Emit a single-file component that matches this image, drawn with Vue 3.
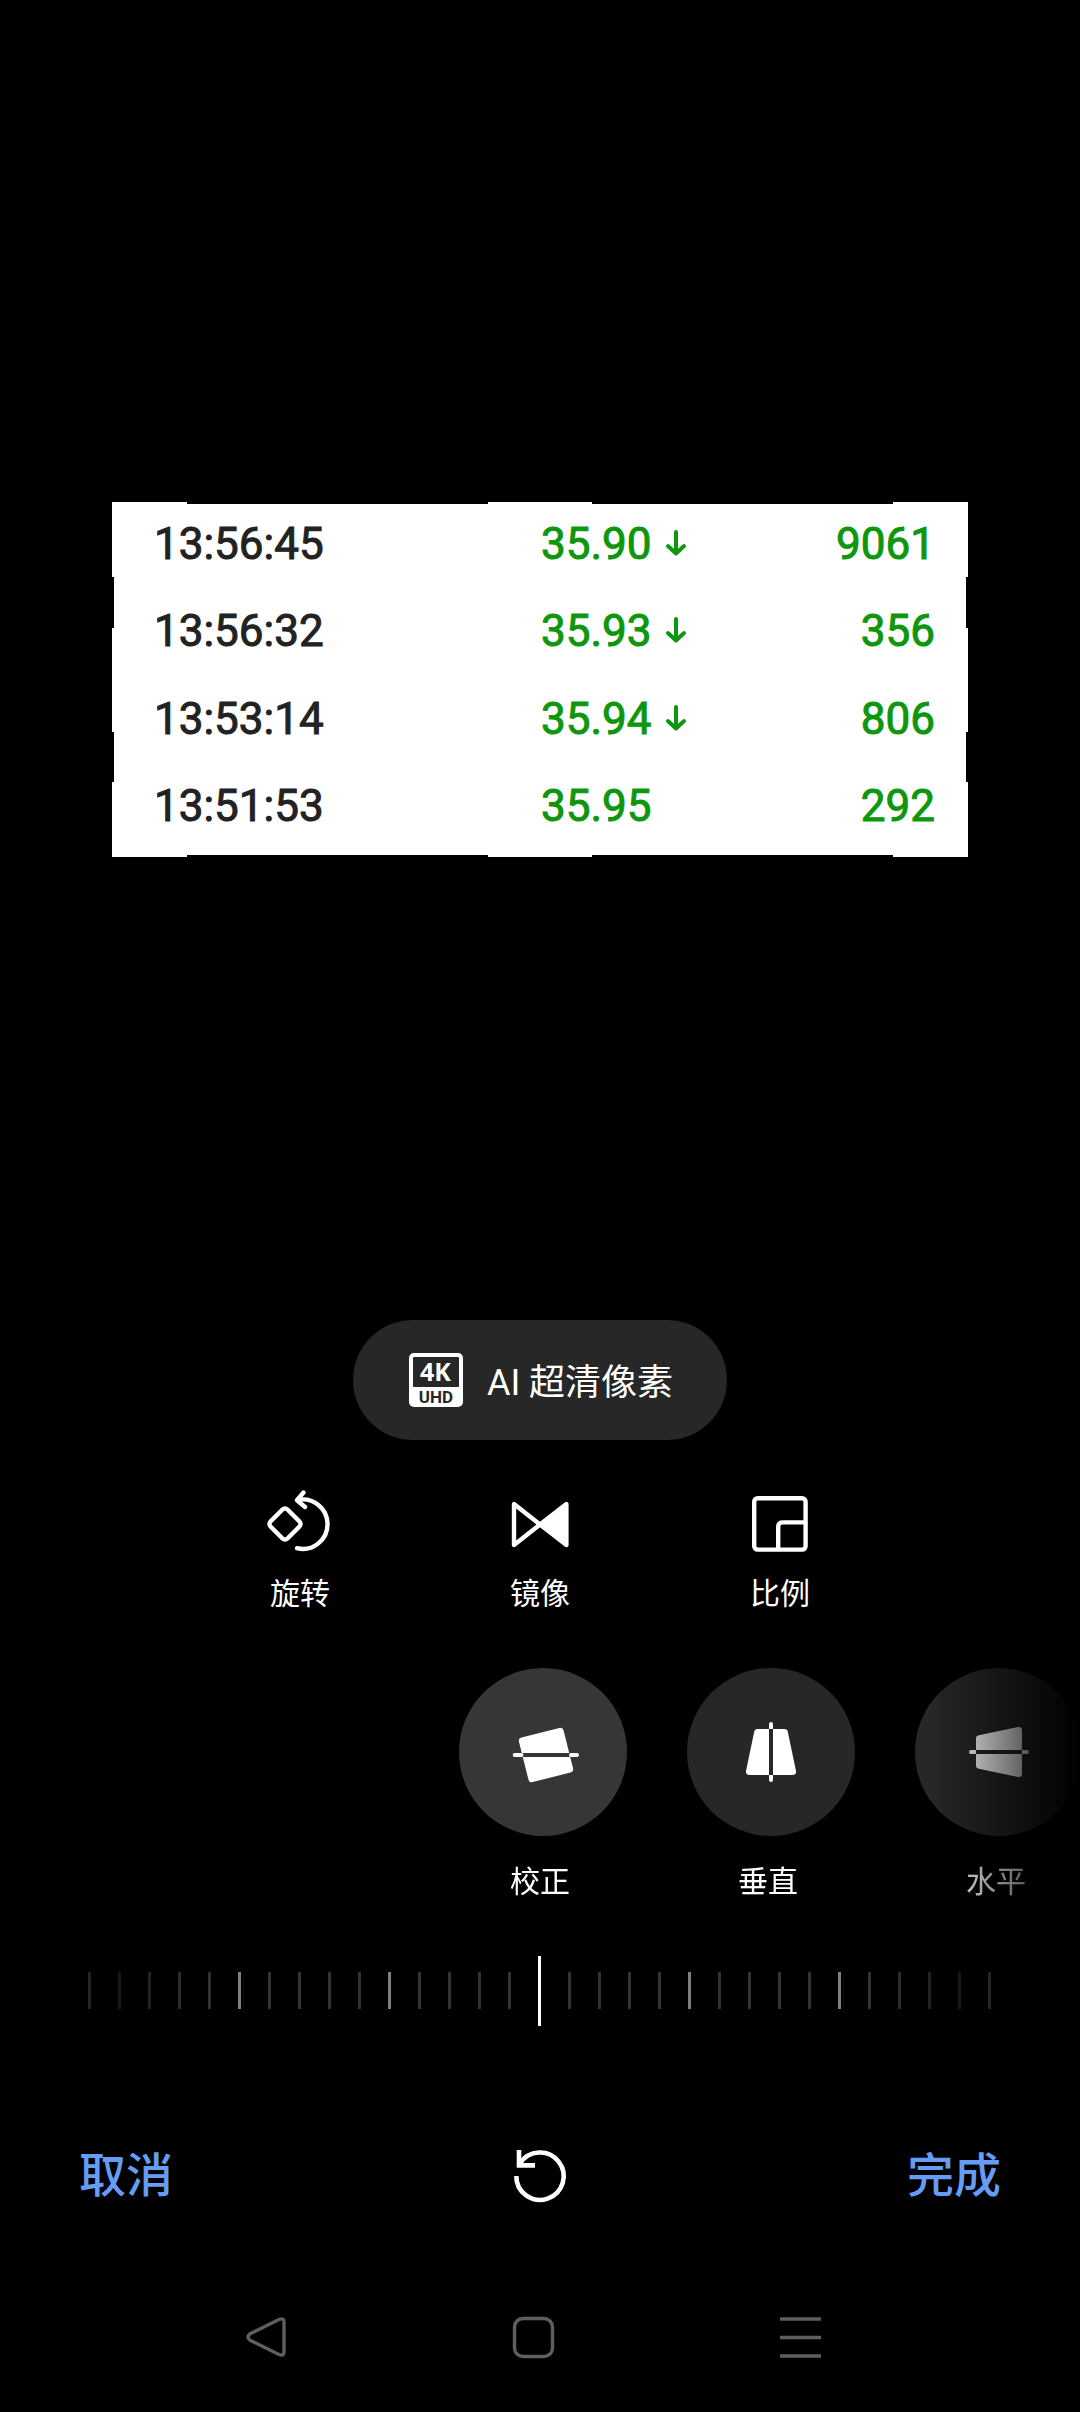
<template>
  <div class="editor">
    <main class="stage">
      <div class="crop">
        <table class="trades">
          <tbody>
            <tr v-for="item in trades" :key="item.time">
              <td class="time">{{ item.time }}</td>
              <td class="price">
                {{ item.price }}
                <svg v-if="item.down" class="arrow" viewBox="0 0 20 26">
                  <path d="M10 2V23M2 16L10 23.5L18 16" />
                </svg>
              </td>
              <td class="count">{{ item.count }}</td>
            </tr>
          </tbody>
        </table>
        <!-- 裁剪框手柄 -->
        <i v-for="h in handles" :key="h" class="handle" :class="h"></i>
      </div>
    </main>

    <button class="ai" type="button">
      <svg class="uhd" viewBox="0 0 54 54">
        <rect width="54" height="54" rx="5" fill="#fff" />
        <rect x="4" y="4" width="46" height="30" rx="1" fill="#272727" />
        <text class="k4" x="26.5" y="27.5">4K</text>
        <text class="hd" x="27" y="49.5">UHD</text>
      </svg>
      <span>AI 超清像素</span>
    </button>

    <div class="tools">
      <button class="tool" type="button" @click="angle = 0">
        <svg class="icon line" viewBox="0 0 72 72">
          <rect x="9" y="24" width="24" height="24" rx="3.5" transform="rotate(45 21 36)" />
          <path d="M33 60.2A24.7 24.7 0 1 0 33 12.2M39.5 4.5L33 12.2L41 19" />
        </svg>
        <span>旋转</span>
      </button>
      <button class="tool" type="button">
        <svg class="icon line" viewBox="0 0 72 72">
          <path d="M10 16V57L36 36.5Z" />
          <path d="M62.4 16V57L36 36.5Z" fill="#fff" />
        </svg>
        <span>镜像</span>
      </button>
      <button class="tool" type="button">
        <svg class="icon line" viewBox="0 0 72 72">
          <rect x="10.2" y="10.2" width="51.4" height="51.4" rx="3.5" />
          <path d="M34.2 61V39Q34.2 34.4 39 34.4H61" />
        </svg>
        <span>比例</span>
      </button>
    </div>

    <div class="modes">
      <button
        v-for="m in modes"
        :key="m.id"
        type="button"
        class="mode"
        :class="{ active: m.id === mode }"
        @click="mode = m.id"
      >
        <span class="circle">
          <svg v-if="m.id === 'rotate'" class="icon solid" viewBox="0 0 72 72">
            <rect x="16" y="16" width="46" height="46" rx="3.5" transform="rotate(-14 39 39)" />
            <path class="cut" d="M13 39H65" />
            <path class="bar" d="M7.7 39H14.5M64 39H70" />
            <path class="butt" d="M8 39H15M63.5 39H70" />
          </svg>
          <svg v-else class="icon solid" viewBox="0 0 72 72">
            <g :transform="m.id === 'horizontal' ? 'rotate(-90 36 36)' : null">
              <path d="M22.5 13H49.5Q52.2 13 52.8 15.8L61 55Q61.5 59 57.5 59H14.5Q10.5 59 11 55L19.2 15.8Q19.8 13 22.5 13Z" />
              <path class="cut" d="M36 13V59" />
              <path class="bar" d="M36 8V11M36 61V64" />
              <path class="butt" d="M36 8V13M36 59V64" />
            </g>
          </svg>
        </span>
        <span>{{ m.name }}</span>
      </button>
    </div>

    <div class="ruler">
      <div class="ticks">
        <i v-for="n in 31" :key="n" :style="{ background: tickColor(n - 1) }"></i>
      </div>
      <input v-model.number="angle" type="range" min="-45" max="45" aria-label="校正角度" />
    </div>

    <footer class="actions">
      <button class="text" type="button">取消</button>
      <button class="reset" type="button" aria-label="重置" @click="angle = 0">
        <svg viewBox="0 0 60 60">
          <path d="M6.3 30A23.7 23.7 0 1 0 10 17.5" />
          <path d="M9 4V19.4H25" />
        </svg>
      </button>
      <button class="text" type="button">完成</button>
    </footer>

    <nav class="system">
      <button type="button" aria-label="返回">
        <svg viewBox="0 0 48 48">
          <path d="M8 20.8L36.5 6.7Q42 4.2 42 9V39Q42 43.8 36.5 41.3L8 27.2Q4 24 8 20.8Z" />
        </svg>
      </button>
      <button type="button" aria-label="主页">
        <svg viewBox="0 0 48 48">
          <rect x="5.5" y="5.5" width="38" height="38" rx="8.5" />
        </svg>
      </button>
      <button type="button" aria-label="最近任务">
        <svg viewBox="0 0 48 48">
          <path d="M4 6H45M4 24.5H45M4 43H45" />
        </svg>
      </button>
    </nav>
  </div>
</template>
<script setup>
import { ref } from "vue";
const trades = [
  { time: "13:56:45", price: "35.90", count: 9061, down: true },
  { time: "13:56:32", price: "35.93", count: 356, down: true },
  { time: "13:53:14", price: "35.94", count: 806, down: true },
  { time: "13:51:53", price: "35.95", count: 292, down: false },
];
const handles = ["tl", "tr", "bl", "br", "top", "bottom", "left-a", "right-a"];
const modes = [
  { id: "rotate", name: "校正" },
  { id: "vertical", name: "垂直" },
  { id: "horizontal", name: "水平" },
];
const mode = ref("rotate");
const angle = ref(0);
// 两端刻度逐渐变暗
const fade = ["#252525", "#191919", "#222", "#2b2b2b", "#323232"];
const tickColor = (i) => {
  if (i === 15) return "transparent";
  const edge = Math.min(i, 30 - i);
  if (edge < fade.length) return fade[edge];
  return i % 5 === 0 ? "#7f7f7f" : "#333";
};
</script>
<style>
body {
  margin: 0;
  background: #000;
}
</style>
<style scoped>
.editor {
  display: flex;
  flex-direction: column;
  min-height: 100vh;
  box-sizing: border-box;
  overflow: hidden;
  background: #000;
  color: #fff;
  font-family: Roboto, "Noto Sans CJK SC", sans-serif;
}
button {
  padding: 0;
  border: 0;
  background: none;
  color: inherit;
  font: inherit;
  cursor: pointer;
}
svg {
  display: block;
  overflow: visible;
}
.stage {
  flex: 1;
  display: flex;
  align-items: center;
  padding: 39px 114px 0;
}
.crop {
  position: relative;
  flex: 1;
  padding-bottom: 1px;
  background: #fff;
}
.trades {
  width: 100%;
  height: 350px;
  border-collapse: collapse;
  table-layout: fixed;
  font-size: 44px;
  line-height: 52px;
  color: #0e970e;
  -webkit-text-stroke: 1px currentColor;
}
.trades td {
  padding: 0 0 8px;
  white-space: nowrap;
}
.trades .time {
  width: 50%;
  padding-left: 40px;
  box-sizing: border-box;
  color: #222;
}
.trades .price {
  padding-left: 1px;
}
.trades .count {
  padding-right: 31px;
  text-align: right;
}
.arrow {
  display: inline-block;
  width: 20px;
  height: 26px;
  margin-left: 4px;
  vertical-align: 3px;
  fill: none;
  stroke: currentColor;
  stroke-width: 4;
  stroke-linecap: round;
  stroke-linejoin: round;
}
.handle {
  position: absolute;
  width: 75px;
  height: 75px;
  box-sizing: border-box;
  border: 0 solid #fff;
}
.tl { left: -2px; top: -2px; border-width: 2px 0 0 2px; }
.tr { right: -2px; top: -2px; border-width: 2px 2px 0 0; }
.bl { left: -2px; bottom: -2px; border-width: 0 0 2px 2px; }
.br { right: -2px; bottom: -2px; border-width: 0 2px 2px 0; }
.top,
.bottom {
  left: calc(50% - 52px);
  width: 104px;
  height: 2px;
  background: #fff;
}
.top { top: -2px; }
.bottom { bottom: -2px; }
.left-a,
.right-a {
  top: calc(50% - 52px);
  width: 2px;
  height: 104px;
  background: #fff;
}
.left-a { left: -2px; }
.right-a { right: -2px; }
.ai {
  display: flex;
  align-items: center;
  align-self: center;
  gap: 24px;
  height: 120px;
  padding: 0 54px 0 56px;
  border-radius: 60px;
  background: #272727;
  font-size: 36px;
}
.ai span {
  padding-bottom: 2px;
}
.uhd {
  width: 54px;
  height: 54px;
  text-anchor: middle;
}
.k4 {
  font: 700 25px "Noto Sans", sans-serif;
  fill: #fff;
}
.hd {
  font: 700 17px Roboto, sans-serif;
  fill: #272727;
}
.tools {
  display: flex;
  justify-content: center;
  margin-top: 48px;
}
.tool,
.mode {
  display: flex;
  flex-direction: column;
  align-items: center;
  font-size: 30px;
  line-height: 40px;
}
.tool {
  width: 240px;
  gap: 14px;
}
.icon {
  width: 72px;
  height: 72px;
}
.line {
  fill: none;
  stroke: #fff;
  stroke-width: 4.4;
  stroke-linecap: round;
  stroke-linejoin: round;
}
.modes {
  display: flex;
  gap: 54px;
  margin-top: 54px;
  padding-left: calc(50% - 87px);
  overflow: hidden;
  -webkit-mask-image: linear-gradient(to left, transparent, #000 150px);
  mask-image: linear-gradient(to left, transparent, #000 150px);
}
.mode {
  flex: none;
  gap: 26px;
}
.circle {
  display: flex;
  align-items: center;
  justify-content: center;
  width: 168px;
  height: 168px;
  margin-left: 6px;
  border-radius: 50%;
  background: #272727;
}
.active .circle {
  background: #363636;
}
.solid {
  fill: #fff;
  stroke-width: 4;
}
.cut {
  stroke: #272727;
}
.active .cut {
  stroke: #363636;
}
.bar,
.butt {
  stroke: #fff;
}
.bar {
  stroke-linecap: round;
}
.ruler {
  position: relative;
  margin: 54px 89px 0 88px;
  height: 70px;
}
.ticks {
  display: flex;
  align-items: center;
  justify-content: space-between;
  height: 69px;
}
.ticks i {
  width: 3px;
  height: 37px;
}
.ruler input {
  position: absolute;
  inset: 0;
  width: 100%;
  height: 100%;
  margin: 0;
  background: none;
  -webkit-appearance: none;
  appearance: none;
}
.ruler input::-webkit-slider-thumb {
  -webkit-appearance: none;
  width: 3px;
  height: 70px;
  background: #fff;
}
.actions {
  display: flex;
  align-items: center;
  justify-content: space-between;
  margin-top: 120px;
  padding: 0 79px;
}
.text {
  color: #659df5;
  font-size: 47px;
  font-weight: 500;
  line-height: 60px;
}
.reset svg {
  width: 60px;
  height: 60px;
  fill: none;
  stroke: #fff;
  stroke-width: 4.6;
}
.system {
  display: flex;
  justify-content: space-between;
  margin-top: 107px;
  padding: 0 256px 51px 242px;
}
.system svg {
  width: 48px;
  height: 48px;
  fill: none;
  stroke: #5f5f5f;
  stroke-width: 3.4;
}
</style>
